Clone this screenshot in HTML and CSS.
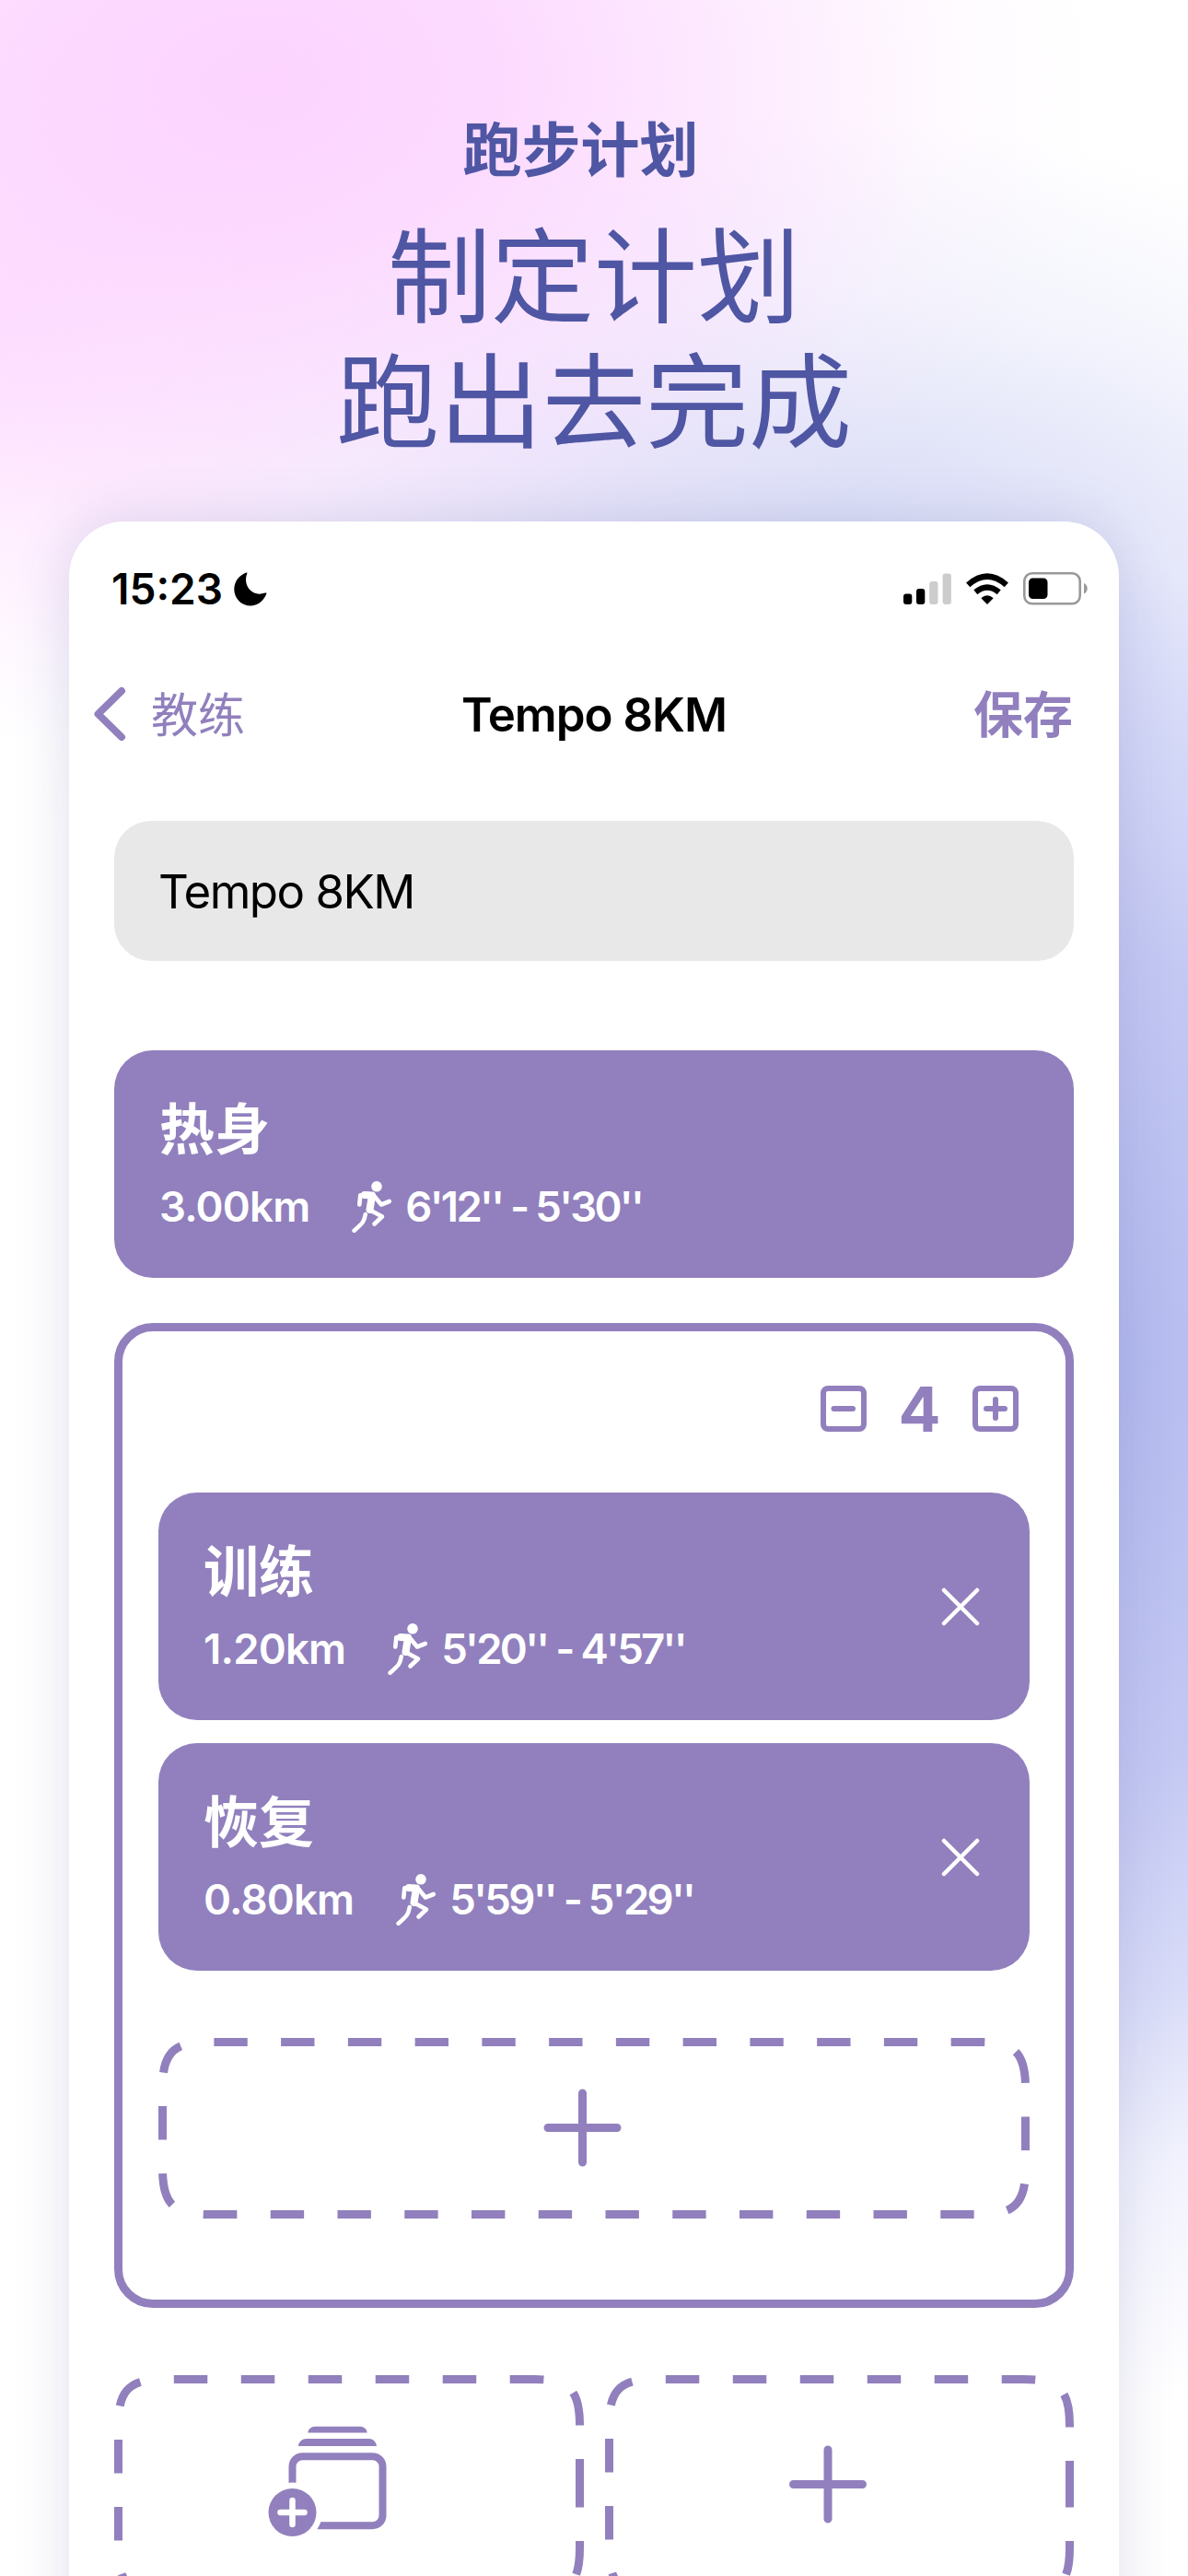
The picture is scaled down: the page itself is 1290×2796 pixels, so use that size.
FILE: index.html
```html
<!DOCTYPE html>
<html lang="zh-CN">
<head>
    <meta charset="UTF-8">
    <meta name="viewport" content="width=device-width, initial-scale=1.0">
    <title>跑步计划</title>
    <link rel="stylesheet" href="styles.css">
</head>
<body>
<svg width="0" height="0" class="defs">
    <symbol id="runner" viewBox="0 0 43 56">
        <circle cx="27" cy="5.8" r="5.8" fill="currentColor"/>
        <path d="M14 15 L22 15.5 L19.5 31" fill="none" stroke="currentColor" stroke-width="8" stroke-linecap="round" stroke-linejoin="round"/>
        <g fill="none" stroke="currentColor" stroke-width="4.6" stroke-linecap="round" stroke-linejoin="round">
            <path d="M8.3 25.5 L9.3 15.2 L20 14.5"/>
            <path d="M25 17 L32 25.5 L40.8 22"/>
            <path d="M20 31.5 L33 38.5 L24.5 46.5"/>
            <path d="M14.8 36 C13.5 44 12 45.5 2.6 53.7"/>
        </g>
    </symbol>
</svg>

<header class="intro">
    <p class="intro-label">跑步计划</p>
    <h1>制定计划<br>跑出去完成</h1>
</header>

<main class="phone">
    <div class="status-bar">
        <div class="status-time">
            <span>15:23</span>
            <svg width="36" height="37" viewBox="0 0 36 37"><path d="M13.5 0.6 C14.3 0.3 14.6 0.8 14.3 1.6 C9.5 14 19 27.5 34 22.6 C35.2 22.2 35.7 22.7 35.3 23.6 C32.5 31.5 25.5 36.5 18 36.5 C8 36.5 0.3 28.5 0.3 18.5 C0.3 10.5 5.5 3.5 13.5 0.6 Z"/></svg>
        </div>
        <div class="status-icons">
            <svg width="52" height="34" viewBox="0 0 52 34">
                <rect x="0" y="22.5" width="9.3" height="11.5" rx="3"/>
                <rect x="14" y="17" width="9.3" height="17" rx="3"/>
                <rect x="28.2" y="9" width="9.3" height="25" rx="3" fill="#ccc"/>
                <rect x="42.6" y="0.5" width="9.3" height="33.5" rx="3" fill="#ccc"/>
            </svg>
            <svg width="46" height="34" viewBox="0 0 46 34">
                <path d="M23 34 L16.3 27.2 Q23 21.5 29.7 27.2 Z"/>
                <path d="M10.3 20.8 Q23 10.3 35.7 20.8" fill="none" stroke="#000" stroke-width="6.3"/>
                <path d="M2.2 12.8 Q23 -5.6 43.8 12.8" fill="none" stroke="#000" stroke-width="6.3"/>
            </svg>
            <svg width="71" height="36" viewBox="0 0 71 36">
                <rect x="1.3" y="1.3" width="60.4" height="33" rx="8.5" fill="none" stroke="#999" stroke-width="2.6"/>
                <rect x="6" y="6.5" width="20.5" height="22.5" rx="4.5"/>
                <path d="M66 12 C71 14.5 71 21 66 23.5 Z" fill="#999"/>
            </svg>
        </div>
    </div>

    <nav class="nav-bar">
        <a class="nav-back">
            <svg width="36" height="60" viewBox="0 0 36 60"><path d="M31 5 L5.5 30 L31 55" fill="none" stroke="currentColor" stroke-width="8" stroke-linecap="round" stroke-linejoin="round"/></svg>
            <span>教练</span>
        </a>
        <h2>Tempo 8KM</h2>
        <a class="nav-save">保存</a>
    </nav>

    <div class="plan">
        <div class="plan-name">Tempo 8KM</div>

        <section class="step">
            <div>
                <h3>热身</h3>
                <p class="step-info">
                    <span class="distance">3.00km</span>
                    <svg class="runner"><use href="#runner"/></svg>
                    <span class="pace">6'12'' - 5'30''</span>
                </p>
            </div>
        </section>

        <section class="repeat">
            <div class="repeat-count">
                <svg width="52" height="52" viewBox="0 0 52 52"><rect x="4" y="4" width="44" height="44" rx="5"/><path d="M15.5 26 H36"/></svg>
                <span>4</span>
                <svg width="52" height="52" viewBox="0 0 52 52"><rect x="4" y="4" width="44" height="44" rx="5"/><path d="M16 26 H36 M26 16 V36"/></svg>
            </div>

            <div class="step">
                <div>
                    <h3>训练</h3>
                    <p class="step-info">
                        <span class="distance">1.20km</span>
                        <svg class="runner"><use href="#runner"/></svg>
                        <span class="pace">5'20'' - 4'57''</span>
                    </p>
                </div>
                <svg class="remove" viewBox="0 0 42 42"><path d="M3 3 L39 39 M39 3 L3 39"/></svg>
            </div>

            <div class="step">
                <div>
                    <h3>恢复</h3>
                    <p class="step-info">
                        <span class="distance">0.80km</span>
                        <svg class="runner"><use href="#runner"/></svg>
                        <span class="pace">5'59'' - 5'29''</span>
                    </p>
                </div>
                <svg class="remove" viewBox="0 0 42 42"><path d="M3 3 L39 39 M39 3 L3 39"/></svg>
            </div>

            <svg class="add" width="946" height="196" viewBox="0 0 946 196">
                <path class="dashes" pathLength="2190" d="M941.5 85.5 V141.5 C941.5 180.1 930.1 191.5 891.5 191.5 H54.5 C15.9 191.5 4.5 180.1 4.5 141.5 V54.5 C4.5 15.9 15.9 4.5 54.5 4.5 H891.5 C930.1 4.5 941.5 15.9 941.5 54.5 Z"/>
                <path class="plus" d="M423 97.5 H498 M460.5 60 V135"/>
            </svg>
        </section>

        <div class="add-row">
            <svg class="add" width="510" height="242" viewBox="0 0 510 242">
                <path class="dashes" pathLength="1403" d="M505.5 107 V187.5 C505.5 226.1 494.1 237.5 455.5 237.5 H54.5 C15.9 237.5 4.5 226.1 4.5 187.5 V54.5 C4.5 15.9 15.9 4.5 54.5 4.5 H455.5 C494.1 4.5 505.5 15.9 505.5 54.5 Z"/>
                <!-- stacked cards with a plus badge -->
                <path d="M210.3 62.5 Q211.5 55.7 218 55.7 H267 Q273.5 55.7 274.7 62.5 Z M199.8 77 Q201.5 69 209 69 H276.5 Q283.5 69 285 77 Z" fill="currentColor"/>
                <rect x="193.5" y="88.2" width="98" height="75" rx="11" fill="none" stroke="currentColor" stroke-width="8"/>
                <circle cx="193.5" cy="149" r="32.5" fill="#fff"/>
                <circle cx="193.5" cy="149" r="26" fill="currentColor"/>
                <path d="M180.5 149 H206.5 M193.5 136 V162" stroke="#fff" stroke-width="6.5" stroke-linecap="round"/>
            </svg>
            <svg class="add" width="509" height="242" viewBox="0 0 509 242">
                <path class="dashes" pathLength="1401" d="M504.5 107 V187.5 C504.5 226.1 493.1 237.5 454.5 237.5 H54.5 C15.9 237.5 4.5 226.1 4.5 187.5 V54.5 C4.5 15.9 15.9 4.5 54.5 4.5 H454.5 C493.1 4.5 504.5 15.9 504.5 54.5 Z"/>
                <path class="plus" d="M204.5 118.5 H279.5 M242 81 V156"/>
            </svg>
        </div>
    </div>
</main>
</body>
</html>
```
FILE: styles.css
```css
* {
    box-sizing: border-box;
}

body {
    font-family: Inter, "Noto Sans CJK SC", sans-serif;
    margin: 0;
    width: 1290px;
    height: 2796px;
    overflow: hidden;
    color: #000;
    background:
        radial-gradient(ellipse 900px 640px at 290px 90px, #fcd4ff 0%, rgba(252, 214, 255, 0.9) 28%, rgba(252, 216, 255, 0.5) 58%, rgba(254, 228, 255, 0.18) 82%, rgba(255, 235, 255, 0) 100%),
        radial-gradient(ellipse 420px 480px at 0px 330px, rgba(254, 218, 255, 0.75) 0%, rgba(254, 224, 255, 0.5) 45%, rgba(255, 235, 255, 0) 100%),
        radial-gradient(ellipse 500px 1180px at 1215px 1480px, #b3baee 0%, #bac0f0 18%, #c3c8f3 38%, rgba(206, 210, 246, 0.8) 58%, rgba(226, 228, 250, 0.5) 74%, rgba(240, 241, 255, 0) 96%),
        radial-gradient(ellipse 860px 560px at 860px 680px, #d6daf5 0%, rgba(218, 222, 247, 0.85) 35%, rgba(232, 234, 250, 0.55) 65%, rgba(245, 246, 255, 0) 100%),
        #fff;
}

h1, h2, h3, p {
    margin: 0;
}

.defs {
    position: absolute;
}

.intro {
    height: 566px;
    padding-top: 115px;
    text-align: center;
    color: #4f56a3;
}

.intro-label {
    font-size: 64px;
    line-height: 96px;
    font-weight: 700;
    padding-right: 29px;
}

.intro h1 {
    font-size: 112px;
    line-height: 136px;
    font-weight: 400;
    margin-top: 22px;
}

.phone {
    width: 1140px;
    height: 2300px;
    margin-left: 75px;
    background-color: #fff;
    border-radius: 60px 60px 0 0;
    box-shadow: 0 0 60px rgba(80, 80, 150, 0.18);
}

.status-bar {
    display: flex;
    justify-content: space-between;
    align-items: center;
    padding: 52px 33px 0 46px;
}

.status-time {
    display: flex;
    align-items: center;
    gap: 12px;
    font-size: 46px;
    line-height: 42px;
    font-weight: 600;
}

.status-icons {
    display: flex;
    align-items: center;
    gap: 16px;
}

.nav-bar {
    display: grid;
    grid-template-columns: 1fr auto 1fr;
    align-items: center;
    height: 80px;
    margin-top: 73px;
    padding: 0 26px;
    color: #9180bd;
}

.nav-back {
    display: flex;
    align-items: center;
    gap: 27px;
    font-size: 51px;
}

.nav-back span {
    padding-bottom: 5px;
}

.nav-bar h2 {
    font-size: 51px;
    font-weight: 600;
    letter-spacing: -1px;
    color: #000;
}

.nav-save {
    font-size: 54px;
    font-weight: 600;
    text-align: right;
    padding: 0 24px 5px 0;
}

.plan {
    padding: 78px 49px 0 49px;
}

.plan-name {
    height: 152px;
    padding: 1px 0 0 48px;
    border-radius: 40px;
    background-color: #e8e8e8;
    font-size: 51px;
    line-height: 152px;
    letter-spacing: -1.5px;
}

.step {
    display: flex;
    justify-content: space-between;
    align-items: center;
    height: 247px;
    padding: 0 54px 0 49px;
    border-radius: 42px;
    background-color: #9180bd;
    color: #fff;
}

.plan-name + .step {
    margin-top: 97px;
}

.step h3 {
    font-size: 60px;
    line-height: 80px;
    font-weight: 600;
}

.step-info {
    display: flex;
    align-items: center;
    height: 60px;
    margin: 14px 0 2px;
    font-size: 45.5px;
    font-weight: 600;
    white-space: nowrap;
}

.distance {
    letter-spacing: -0.8px;
}

.pace {
    letter-spacing: -2.7px;
}

.runner {
    width: 43px;
    height: 56px;
    margin: 0 15px 0 46px;
}

.remove {
    width: 42px;
    height: 42px;
    fill: none;
    stroke: #fff;
    stroke-width: 4.5;
    stroke-linecap: round;
}

.repeat {
    height: 1069px;
    margin-top: 49px;
    padding: 58px 39px 0;
    border: 9px solid #9180bd;
    border-radius: 42px;
}

.repeat-count {
    display: flex;
    justify-content: flex-end;
    align-items: center;
    height: 52px;
    margin: 0 11px 65px;
    color: #9180bd;
    font-size: 68px;
    font-weight: 700;
}

.repeat-count span {
    width: 113px;
    text-align: center;
}

.repeat-count svg {
    fill: none;
    stroke: currentColor;
    stroke-width: 6;
    stroke-linecap: round;
}

.repeat .step + .step {
    margin-top: 25px;
}

.add {
    display: block;
    color: #9180bd;
}

.repeat .add {
    margin-top: 73px;
}

.dashes {
    fill: none;
    stroke: currentColor;
    stroke-width: 9;
    stroke-dasharray: 36.5 36.5;
}

.plus {
    fill: none;
    stroke: currentColor;
    stroke-width: 9;
    stroke-linecap: round;
}

.add-row {
    display: flex;
    justify-content: space-between;
    margin-top: 73px;
}
```
